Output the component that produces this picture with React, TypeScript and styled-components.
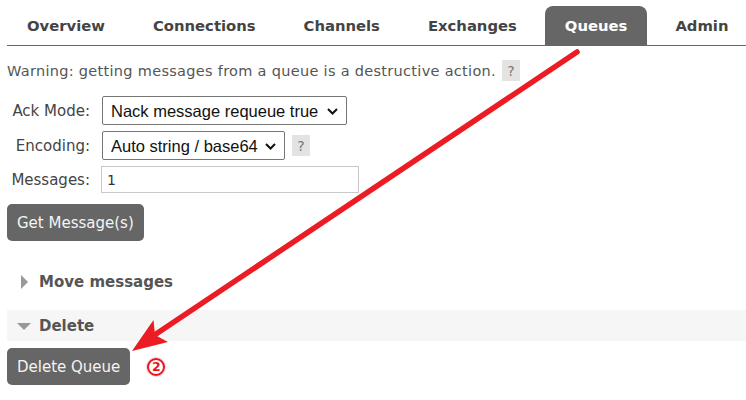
import React from "react";
import styled, { createGlobalStyle } from "styled-components";

const GlobalStyle = createGlobalStyle`
  html, body { margin: 0; padding: 0; background: #fff; }
  body { font-family: "DejaVu Sans", Verdana, sans-serif; color: #444; }
  * { box-sizing: border-box; }
`;

const Page = styled.div`
  position: relative;
  width: 746px;
  height: 400px;
  overflow: hidden;
  padding: 6px 0 0 7px;
`;

const TabBar = styled.nav`
  display: flex;
  gap: 8px;
  height: 40px;
  border-bottom: 1px solid #666;
`;

const Tab = styled.div<{ $active?: boolean }>`
  display: flex;
  align-items: center;
  padding: 0 20px;
  font-size: 14.8px;
  font-weight: bold;
  border-radius: 8px 8px 0 0;
  color: ${(p) => (p.$active ? "#fff" : "#444")};
  background: ${(p) => (p.$active ? "#666" : "transparent")};
`;

const WarningRow = styled.div`
  display: flex;
  align-items: center;
  gap: 6px;
  margin-top: 14px;
  height: 21px;
  font-size: 14.5px;
  letter-spacing: 0.3px;
  color: #555;
`;

const Help = styled.span`
  display: inline-flex;
  align-items: center;
  justify-content: center;
  width: 18px;
  height: 21px;
  background: #e3e3e3;
  color: #777;
  font-size: 14px;
  letter-spacing: 0;
`;

const Form = styled.div`
  display: grid;
  grid-template-columns: 83px auto;
  column-gap: 12px;
  row-gap: 6px;
  margin-top: 15px;
  align-items: center;
  justify-items: start;
`;

const Label = styled.label`
  justify-self: end;
  font-size: 15px;
  color: #444;
`;

const ControlRow = styled.div`
  display: flex;
  align-items: center;
  gap: 7px;
`;

const SelectWrap = styled.div<{ $w: number }>`
  position: relative;
  width: ${(p) => p.$w}px;
  height: 29px;
`;

const Select = styled.select`
  appearance: none;
  -webkit-appearance: none;
  width: 100%;
  height: 100%;
  border: 1px solid #767676;
  border-radius: 2px;
  background: #fff;
  padding: 0 0 0 8px;
  font-family: "Liberation Sans", Arial, sans-serif;
  font-size: 16.5px;
  color: #111;
  outline: none;
`;

const Chevron = styled.svg`
  position: absolute;
  right: 9px;
  top: 12px;
  pointer-events: none;
`;

const Input = styled.input`
  width: 258px;
  height: 27px;
  margin-left: -1px;
  border: 1px solid #c9c9c9;
  padding: 0 0 0 5px;
  font-family: "DejaVu Sans", Verdana, sans-serif;
  font-size: 14px;
  color: #333;
  outline: none;
`;

const Button = styled.button<{ $top: number }>`
  display: block;
  height: 37px;
  margin-top: ${(p) => p.$top}px;
  padding: 0 10px;
  border: none;
  border-radius: 5px;
  background: #666;
  color: #f4f4f4;
  font-family: "DejaVu Sans", Verdana, sans-serif;
  font-size: 15px;
`;

const SectionHeader = styled.div<{ $shaded?: boolean; $top: number }>`
  display: flex;
  align-items: center;
  height: 31px;
  margin-top: ${(p) => p.$top}px;
  background: ${(p) => (p.$shaded ? "#f6f6f6" : "transparent")};
  font-size: 15px;
  font-weight: bold;
  color: #555;
`;

const TriSlot = styled.span`
  width: 32px;
  display: flex;
  justify-content: center;
  padding-left: 1px;
`;

const TriRight = styled.span`
  width: 0;
  height: 0;
  border-top: 7px solid transparent;
  border-bottom: 7px solid transparent;
  border-left: 7px solid #999;
  margin-left: 2px;
`;

const TriDown = styled.span`
  width: 0;
  height: 0;
  border-left: 7px solid transparent;
  border-right: 7px solid transparent;
  border-top: 7px solid #999;
  margin-top: 1px;
`;

const ButtonRow = styled.div`
  display: flex;
  align-items: center;
  gap: 17px;
  margin-top: 7px;
`;

const Marker = styled.span`
  display: inline-flex;
  align-items: center;
  justify-content: center;
  width: 18px;
  height: 18px;
  margin-top: 1px;
  border: 2px solid #e8141c;
  border-radius: 50%;
  box-shadow: 0 0 1px 1px #fbd0d2;
  font-family: "DejaVu Sans", sans-serif;
  font-size: 12.5px;
  font-weight: bold;
  line-height: 1;
  color: #e8141c;
`;

const ArrowLayer = styled.svg`
  position: absolute;
  left: 0;
  top: 0;
  pointer-events: none;
`;

const tabs = ["Overview", "Connections", "Channels", "Exchanges", "Queues", "Admin"];

export default function App() {
  return (
    <>
      <GlobalStyle />
      <Page>
        <TabBar>
          {tabs.map((t) => (
            <Tab key={t} $active={t === "Queues"}>
              {t}
            </Tab>
          ))}
        </TabBar>

        <WarningRow>
          Warning: getting messages from a queue is a destructive action.
          <Help>?</Help>
        </WarningRow>

        <Form>
          <Label>Ack Mode:</Label>
          <SelectWrap $w={245}>
            <Select defaultValue="nack">
              <option value="nack">Nack message requeue true</option>
            </Select>
            <Chevron width="11" height="7" viewBox="0 0 11 7">
              <path d="M1 1 L5.5 5.5 L10 1" fill="none" stroke="#111" strokeWidth="2" />
            </Chevron>
          </SelectWrap>

          <Label>Encoding:</Label>
          <ControlRow>
            <SelectWrap $w={183}>
              <Select defaultValue="auto">
                <option value="auto">Auto string / base64</option>
              </Select>
              <Chevron width="11" height="7" viewBox="0 0 11 7">
                <path d="M1 1 L5.5 5.5 L10 1" fill="none" stroke="#111" strokeWidth="2" />
              </Chevron>
            </SelectWrap>
            <Help>?</Help>
          </ControlRow>

          <Label>Messages:</Label>
          <Input defaultValue="1" />
        </Form>

        <Button $top={11}>Get Message(s)</Button>

        <SectionHeader $top={25}>
          <TriSlot>
            <TriRight />
          </TriSlot>
          Move messages
        </SectionHeader>

        <SectionHeader $top={13} $shaded>
          <TriSlot>
            <TriDown />
          </TriSlot>
          Delete
        </SectionHeader>

        <ButtonRow>
          <Button $top={0}>Delete Queue</Button>
          <Marker>2</Marker>
        </ButtonRow>

        <ArrowLayer width="746" height="400" viewBox="0 0 746 400">
          <line x1="577" y1="52" x2="156" y2="334" stroke="#ec1c24" strokeWidth="5.5" strokeLinecap="round" />
          <polygon points="132,351 153.5,320 155,335 168,342" fill="#ec1c24" />
        </ArrowLayer>
      </Page>
    </>
  );
}
